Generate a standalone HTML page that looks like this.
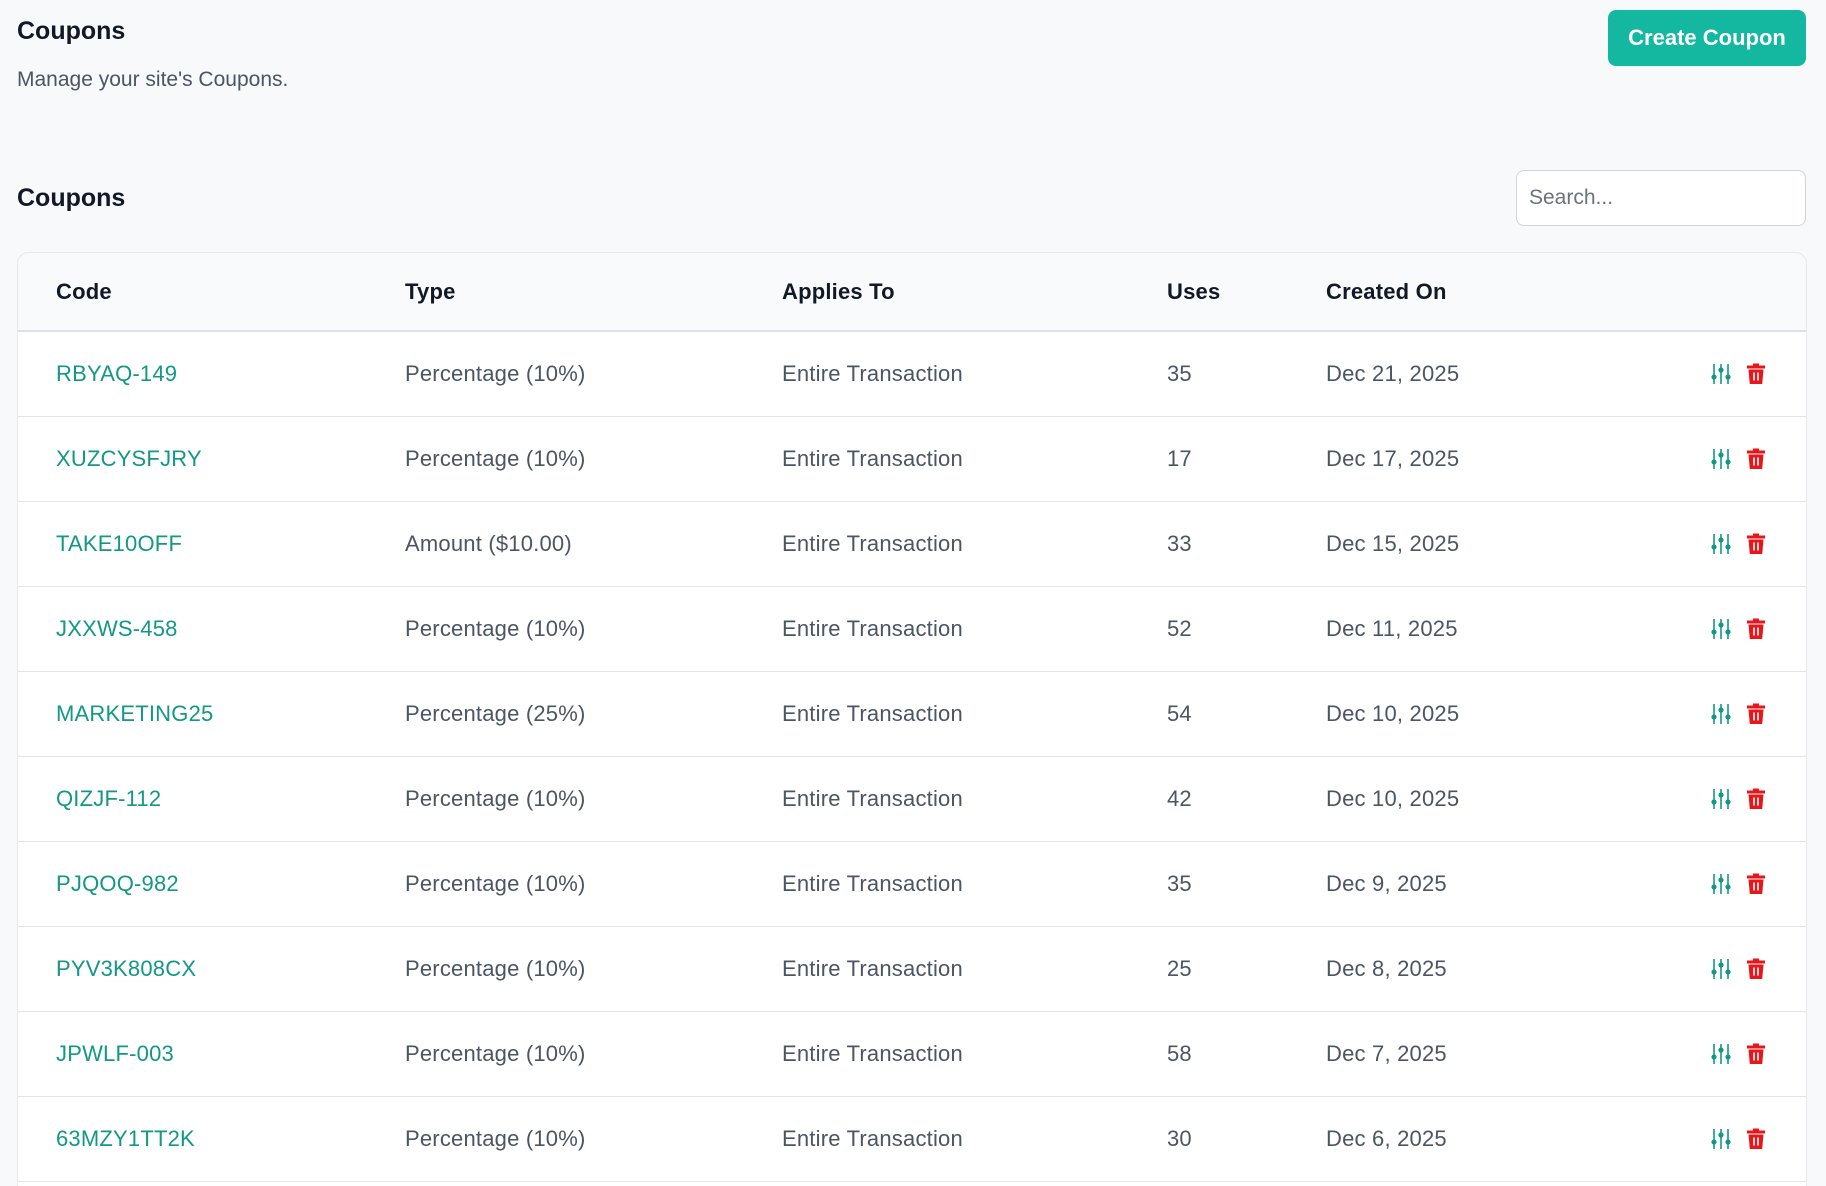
<!DOCTYPE html>
<html><head><meta charset="utf-8"><style>
*{box-sizing:border-box;margin:0;padding:0}
html,body{width:1826px;height:1186px;overflow:hidden}
body{background:#f8f9fb;font-family:"Liberation Sans",sans-serif;color:#111827;position:relative}
.t1{position:absolute;left:17px;top:17px;font-size:25px;font-weight:bold}
.sub{position:absolute;left:17px;top:68px;font-size:21px;color:#4b5563}
.btn{position:absolute;left:1608px;top:10px;width:198px;height:56px;background:#14b8a0;color:#fff;border-radius:8px;font-size:22px;font-weight:bold;display:flex;align-items:center;justify-content:center}
.t2{position:absolute;left:17px;top:184px;font-size:25px;font-weight:bold}
.search{position:absolute;left:1516px;top:170px;width:290px;height:56px;background:#fff;border:1px solid #d1d5db;border-radius:8px;font-size:21px;color:#6b7280;padding:0 12px;display:flex;align-items:center}
.card{position:absolute;left:17px;top:252px;width:1790px;height:934px;background:#fff;border:1px solid #e5e7eb;border-bottom:none;border-radius:12px 12px 0 0;overflow:hidden}
.row{position:relative;height:85px;border-bottom:1.5px solid #e2e4e9;font-size:22px;letter-spacing:0.2px;color:#4b5563}
.head{height:79px;background:#f9fafb;border-bottom:2px solid #dcdfe5;color:#111827;font-weight:bold}
.row span{position:absolute;top:50%;transform:translateY(-50%)}
.c1{left:38px}.c2{left:387px}.c3{left:764px}.c4{left:1149px}.c5{left:1308px}
.code{color:#139786}
.ic{position:absolute;top:50%;transform:translateY(-50%)}
</style></head><body>
<div class="t1">Coupons</div>
<div class="sub">Manage your site's Coupons.</div>
<div class="btn">Create Coupon</div>
<div class="t2">Coupons</div>
<div class="search">Search...</div>
<div class="card">
<div class="row head"><span class="c1">Code</span><span class="c2">Type</span><span class="c3">Applies To</span><span class="c4">Uses</span><span class="c5">Created On</span></div>
<div id="rows"></div>
</div>
<script>
const d=[["RBYAQ-149","Percentage (10%)","35","Dec 21, 2025"],["XUZCYSFJRY","Percentage (10%)","17","Dec 17, 2025"],["TAKE10OFF","Amount ($10.00)","33","Dec 15, 2025"],["JXXWS-458","Percentage (10%)","52","Dec 11, 2025"],["MARKETING25","Percentage (25%)","54","Dec 10, 2025"],["QIZJF-112","Percentage (10%)","42","Dec 10, 2025"],["PJQOQ-982","Percentage (10%)","35","Dec 9, 2025"],["PYV3K808CX","Percentage (10%)","25","Dec 8, 2025"],["JPWLF-003","Percentage (10%)","58","Dec 7, 2025"],["63MZY1TT2K","Percentage (10%)","30","Dec 6, 2025"],["ABCDE-000","Percentage (10%)","30","Dec 5, 2025"]];
const sl='<svg class="ic" style="left:1693px" width="20" height="22" viewBox="0 0 20 22"><g stroke="#139786" stroke-width="1.6" fill="#139786"><line x1="3" y1="1" x2="3" y2="21"/><line x1="10" y1="1" x2="10" y2="21"/><line x1="17" y1="1" x2="17" y2="21"/><circle cx="3" cy="14" r="1.8"/><circle cx="10" cy="7" r="1.8"/><circle cx="17" cy="14" r="1.8"/></g></svg>';
const tr='<svg class="ic" style="left:1728px" width="20" height="23" viewBox="0 0 20 23"><path d="M7 1h6v2h6v3H1V3h6z" fill="#e8161b"/><path d="M2.5 7h15l-1.3 14.5H3.8z" fill="#e8161b"/><line x1="8" y1="10" x2="8" y2="18" stroke="#fff" stroke-width="1.6"/><line x1="12" y1="10" x2="12" y2="18" stroke="#fff" stroke-width="1.6"/></svg>';
document.getElementById('rows').innerHTML=d.map(r=>`<div class="row"><span class="c1 code">${r[0]}</span><span class="c2">${r[1]}</span><span class="c3">Entire Transaction</span><span class="c4">${r[2]}</span><span class="c5">${r[3]}</span>${sl}${tr}</div>`).join('');
</script>
</body></html>
